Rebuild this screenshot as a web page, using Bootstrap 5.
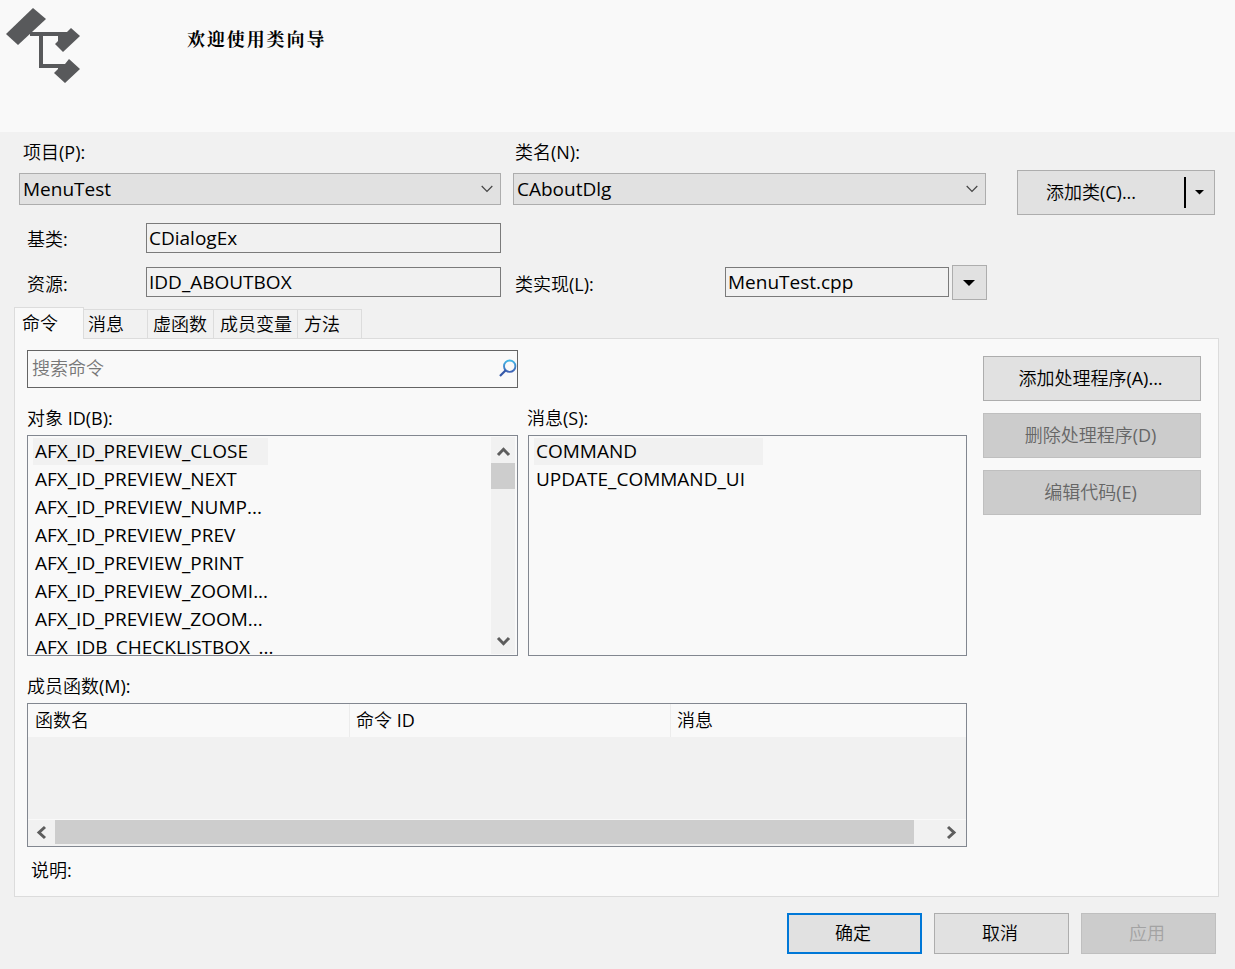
<!DOCTYPE html>
<html lang="zh-CN">
<head>
<meta charset="utf-8">
<title>类向导</title>
<link href="https://cdn.jsdelivr.net/npm/bootstrap@5.3.0/dist/css/bootstrap.min.css" rel="stylesheet">
<style>
body{width:1235px;height:969px;overflow:hidden;background:#f1f1f1;color:#000;font:18px/24px "Open Sans","Noto Sans CJK SC DemiLight","Noto Sans CJK SC",sans-serif}
.zh{white-space:nowrap}
.banner{height:132px;background:#f9f9f9;padding:0 0 0 5px}
.banner svg{margin-top:6px}
.banner h1{font:bold 18px/24px "Noto Serif CJK SC","Noto Sans CJK SC",serif;letter-spacing:1.9px;margin:26px 0 0 106px}
.top-area{height:175px;padding-left:19px}
.col-project{width:482px;margin-right:12px}
.col-class{width:474px;margin-right:30px}
.cap-row{height:41px;padding:8px 0 0 3px}
.combo{height:32px;background:#e1e1e1;border:1px solid #adadad;font-size:19px;line-height:30px;padding:0 7px 0 3px}
.field{height:30px;border:1px solid #7a7a7a;font-size:19px;line-height:28px;padding-left:2px}
.btn{--bs-btn-border-radius:0;--bs-btn-font-size:18px;--bs-btn-line-height:24px;--bs-btn-padding-x:0;--bs-btn-padding-y:0;--bs-btn-color:#000;--bs-btn-bg:#e1e1e1;--bs-btn-border-color:#adadad;--bs-btn-disabled-bg:#ccc;--bs-btn-disabled-border-color:#bfbfbf;--bs-btn-disabled-color:#666;--bs-btn-disabled-opacity:1;display:flex;align-items:center;justify-content:center;white-space:nowrap}
.btn-add{width:198px;height:45px;margin-top:38px}
.btn-add .lbl{flex:1;padding:0 20px 1px 0}
.btn-add .bar{width:2px;height:31px;background:#000}
.btn-drop{width:35px;height:35px;padding-right:2px}
.nav-tabs{--bs-nav-tabs-border-width:0;--bs-nav-tabs-border-radius:0;margin-left:14px;height:31px;align-items:flex-end;flex-wrap:nowrap}
.nav-tabs .nav-link{color:#000;padding:2px 0 0 5px;height:29px;border:1px solid #dcdcdc;border-width:1px 1px 0 0;line-height:24px;white-space:nowrap;margin:0}
.nav-tabs .nav-link.active{color:#000;height:32px;width:70px;background:#f9f9f9;border-width:1px 1px 0 1px;border-color:#dcdcdc;margin-bottom:-1px;position:relative;padding:3px 0 0 7px}
.panel{width:1205px;height:559px;margin-left:14px;background:#f9f9f9;border:1px solid #dcdcdc;padding:11px 17px 0 12px}
.main-col{width:940px}
.search{width:491px;height:38px;border:1px solid #646464;padding:0 0 2px 4px;color:#777}
.list-cap{height:47px;padding-top:18px}
.listbox{height:221px;border:1px solid #828790;overflow:hidden;font-size:19px}
.listbox .list-group{--bs-list-group-bg:transparent;--bs-list-group-color:#000;--bs-list-group-border-width:0;--bs-list-group-border-radius:0;--bs-list-group-item-padding-x:2px;--bs-list-group-item-padding-y:0;padding:2px 0 0 5px;width:240px;white-space:nowrap}
.listbox .list-group-item{height:28px;line-height:26px;flex:none}
.listbox .list-group-item.sel{background:linear-gradient(#f1f1f1,#f1f1f1) 0 0/100% 27px no-repeat}
.vscroll{width:24px;background:#f1f1f1;margin:1px 2px 1px 0}
.vscroll .thumb{height:26px;background:#cdcdcd}
.grid-box{height:144px;border:1px solid #828790;background:#f1f1f1}
.grid-head{height:33px;background:#f9f9f9;line-height:32px}
.grid-head div{flex:none;width:321px;padding-left:7px;border-right:1px solid #ececec}
.grid-head div:first-child{width:322px}
.hscroll{height:27px;border-top:1px solid #f9f9f9}
.hscroll .thumb{width:859px;height:24px;background:#cdcdcd}
.side .btn{width:218px;height:45px;margin-bottom:12px;padding:0 3px 1px 0}
.foot{padding:16px 19px 0 0;gap:12px}
.foot .btn{width:135px;height:41px;padding:0 3px 1px 0}
.foot .ok{border:2px solid #0078d7}
.foot .btn:disabled{--bs-btn-disabled-color:#a3a3a3}
</style>
</head>
<body class="zh">
<header class="banner d-flex align-items-start">
  <svg width="76" height="78" viewBox="5 6 76 78" fill="#58595b"><path d="M33 8 46 19 18 45 6 34Z"/><path d="M30 32H67L71 28 80 36 63 52 55 44 58 41V36H43V64H65L69 59 80 69 65 83 54 73 58 69V68H39V36H30Z"/></svg>
  <h1>欢迎使用类向导</h1>
</header>

<section class="top-area d-flex align-items-start">
  <div class="col-project">
    <div class="cap-row" style="padding-left:4px">项目(P):</div>
    <div class="combo d-flex align-items-center justify-content-between"><span>MenuTest</span><svg width="12" height="8" fill="none" stroke="#444" stroke-width="1.2"><path d="M.7 1 6 6.3 11.3 1"/></svg></div>
    <div class="d-flex justify-content-between" style="margin-top:18px"><span class="ps-2 pt-1">基类:</span><div class="field" style="width:355px">CDialogEx</div></div>
    <div class="d-flex justify-content-between" style="margin-top:14px"><span class="ps-2" style="padding-top:5px">资源:</span><div class="field" style="width:355px">IDD_ABOUTBOX</div></div>
  </div>
  <div class="col-class">
    <div class="cap-row" style="padding-left:2px">类名(N):</div>
    <div class="combo d-flex align-items-center justify-content-between" style="width:473px"><span>CAboutDlg</span><svg width="12" height="8" fill="none" stroke="#444" stroke-width="1.2"><path d="M.7 1 6 6.3 11.3 1"/></svg></div>
    <div class="d-flex align-items-start" style="margin-top:60px"><span class="flex-fill" style="padding:7px 0 0 2px">类实现(L):</span><div class="field" style="width:224px;margin:2px 3px 0 0">MenuTest.cpp</div><button class="btn btn-drop"><svg width="12" height="6"><path d="M0 0H12L6 6Z"/></svg></button></div>
  </div>
  <button class="btn btn-add"><span class="lbl">添加类(C)...</span><span class="bar"></span><svg width="9" height="5" style="margin:0 10px 1px 9px"><path d="M0 0H9L4.5 4.5Z"/></svg></button>
</section>

<ul class="nav nav-tabs">
  <li><a class="nav-link active">命令</a></li>
  <li><a class="nav-link" style="width:64px;padding-left:4px">消息</a></li>
  <li><a class="nav-link" style="width:66px">虚函数</a></li>
  <li><a class="nav-link" style="width:84px;padding-left:6px">成员变量</a></li>
  <li><a class="nav-link" style="width:64px;padding-left:6px">方法</a></li>
</ul>
<main class="panel d-flex align-items-start justify-content-between">
  <div class="main-col">
    <div class="search d-flex align-items-center justify-content-between"><span>搜索命令</span>
      <svg width="18" height="18" fill="none"><defs><linearGradient id="lens" x1="0" y1="0" x2="0" y2="1"><stop stop-color="#41b6e6"/><stop offset="1" stop-color="#3f62b5"/></linearGradient></defs><circle cx="10.7" cy="7.2" r="5.7" stroke="url(#lens)" stroke-width="1.9"/><path d="M6.7 11.2 1 17" stroke="#3558a8" stroke-width="2.2"/></svg></div>
    <div class="d-flex" style="gap:10px">
      <div style="width:491px">
        <div class="list-cap">对象 ID(B):</div>
        <div class="listbox d-flex justify-content-between">
          <ul class="list-group">
            <li class="list-group-item sel">AFX_ID_PREVIEW_CLOSE</li>
            <li class="list-group-item">AFX_ID_PREVIEW_NEXT</li>
            <li class="list-group-item">AFX_ID_PREVIEW_NUMP...</li>
            <li class="list-group-item">AFX_ID_PREVIEW_PREV</li>
            <li class="list-group-item">AFX_ID_PREVIEW_PRINT</li>
            <li class="list-group-item">AFX_ID_PREVIEW_ZOOMI...</li>
            <li class="list-group-item">AFX_ID_PREVIEW_ZOOM...</li>
            <li class="list-group-item">AFX_IDB_CHECKLISTBOX_...</li>
          </ul>
          <div class="vscroll d-flex flex-column align-items-center">
            <svg width="24" height="26" fill="none" stroke="#5d5d5d" stroke-width="3"><path d="M7 18 12.5 12.3 18 18"/></svg>
            <div class="thumb w-100"></div>
            <svg class="mt-auto" width="24" height="26" fill="none" stroke="#5d5d5d" stroke-width="3"><path d="M7 10 12.5 15.7 18 10"/></svg>
          </div>
        </div>
      </div>
      <div style="width:439px">
        <div class="list-cap" style="margin-left:-1px">消息(S):</div>
        <div class="listbox">
          <ul class="list-group" style="width:234px">
            <li class="list-group-item sel">COMMAND</li>
            <li class="list-group-item">UPDATE_COMMAND_UI</li>
          </ul>
        </div>
      </div>
    </div>
    <div class="list-cap">成员函数(M):</div>
    <div class="grid-box d-flex flex-column">
      <div class="grid-head d-flex"><div>函数名</div><div style="padding-left:6px">命令 ID</div><div class="border-0" style="width:auto;padding-left:6px">消息</div></div>
      <div class="hscroll mt-auto d-flex">
        <svg width="27" height="24" fill="none" stroke="#5d5d5d" stroke-width="3"><path d="M17 7 11 12.5 17 18"/></svg>
        <div class="thumb"></div>
        <svg class="ms-auto" width="27" height="24" fill="none" stroke="#5d5d5d" stroke-width="3"><path d="M9 7 15 12.5 9 18"/></svg>
      </div>
    </div>
    <div style="padding:11px 0 0 4px">说明:</div>
  </div>
  <div class="side" style="margin-top:6px">
    <button class="btn">添加处理程序(A)...</button>
    <button class="btn" disabled>删除处理程序(D)</button>
    <button class="btn" disabled>编辑代码(E)</button>
  </div>
</main>
<footer class="foot d-flex justify-content-end">
  <button class="btn ok">确定</button>
  <button class="btn">取消</button>
  <button class="btn" disabled>应用</button>
</footer>
<script src="https://cdn.jsdelivr.net/npm/bootstrap@5.3.0/dist/js/bootstrap.bundle.min.js"></script>
</body>
</html>
